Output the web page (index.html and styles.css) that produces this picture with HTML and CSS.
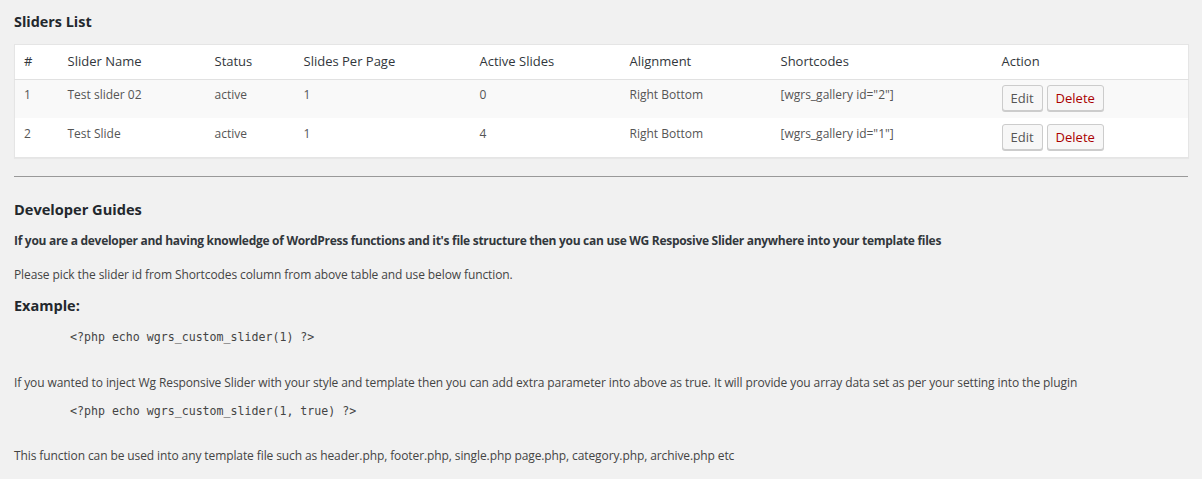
FILE: index.html
```html
<!DOCTYPE html>
<html>
<head>
<meta charset="utf-8">
<link rel="stylesheet" href="styles.css">
</head>
<body>
<div class="wrap">
  <h2 class="title">Sliders List</h2>
  <table class="sliders">
    <colgroup>
      <col class="c1"><col class="c2"><col class="c3"><col class="c4"><col class="c5"><col class="c6"><col class="c7"><col class="c8">
    </colgroup>
    <thead>
      <tr><th>#</th><th>Slider Name</th><th>Status</th><th>Slides Per Page</th><th>Active Slides</th><th>Alignment</th><th>Shortcodes</th><th>Action</th></tr>
    </thead>
    <tbody>
      <tr class="alt"><td>1</td><td>Test slider 02</td><td>active</td><td>1</td><td>0</td><td>Right Bottom</td><td>[wgrs_gallery id="2"]</td><td class="act"><button class="btn">Edit</button><button class="btn del">Delete</button></td></tr>
      <tr><td>2</td><td>Test Slide</td><td>active</td><td>1</td><td>4</td><td>Right Bottom</td><td>[wgrs_gallery id="1"]</td><td class="act"><button class="btn">Edit</button><button class="btn del">Delete</button></td></tr>
    </tbody>
  </table>
  <hr class="sep">
  <h2 class="title2">Developer Guides</h2>
  <p class="strong">If you are a developer and having knowledge of WordPress functions and it's file structure then you can use WG Resposive Slider anywhere into your template files</p>
  <p class="p1">Please pick the slider id from Shortcodes column from above table and use below function.</p>
  <h3 class="ex">Example:</h3>
  <pre class="code c-a">&lt;?php echo wgrs_custom_slider(1) ?&gt;</pre>
  <p class="p2">If you wanted to inject Wg Responsive Slider with your style and template then you can add extra parameter into above as true. It will provide you array data set as per your setting into the plugin</p>
  <pre class="code c-b">&lt;?php echo wgrs_custom_slider(1, true) ?&gt;</pre>
  <p class="p3">This function can be used into any template file such as header.php, footer.php, single.php page.php, category.php, archive.php etc</p>
</div>
</body>
</html>
```
FILE: styles.css
```css
html, body {
  margin: 0;
  padding: 0;
  background: #f1f1f1;
}
body {
  font-family: "Open Sans", "Noto Sans", sans-serif;
  font-size: 12px;
  color: #444;
  width: 1202px;
  height: 479px;
  overflow: hidden;
}
.wrap {
  padding: 0 14px;
}
.title {
  margin: 0;
  padding-top: 12px;
  font-size: 14.4px;
  line-height: 20px;
  font-weight: 700;
  color: #23282d;
}
.sliders {
  margin-top: 12px;
  width: 1174px;
  border-collapse: collapse;
  table-layout: fixed;
  background: #fff;
  border: 1px solid #e5e5e5;
  box-shadow: 0 1px 1px rgba(0,0,0,.04);
}
.c1 { width: 44px; }
.c2 { width: 147px; }
.c3 { width: 89px; }
.c4 { width: 176px; }
.c5 { width: 150px; }
.c6 { width: 151px; }
.c7 { width: 221px; }
.c8 { width: 196px; }
.sliders th {
  text-align: left;
  font-weight: 400;
  font-size: 13px;
  color: #32373c;
  padding: 7px 9px 9px;
  line-height: 18px;
  height: 17px;
  border-bottom: 1px solid #e1e1e1;
}
.sliders td {
  vertical-align: top;
  padding: 7px 9px 0;
  line-height: 18px;
  color: #555;
  height: 32px;
}
.sliders tr.alt td {
  background: #f9f9f9;
  padding-top: 6px;
  height: 32px;
}
.sliders td.act,
.sliders tr.alt td.act {
  padding-top: 5px;
}
.sliders tr:not(.alt) td.act {
  padding-top: 6px;
  height: 33px;
}
.btn {
  display: inline-block;
  height: 26px;
  margin: 0 4px 0 0;
  padding: 0 8px;
  font-family: inherit;
  font-size: 13px;
  line-height: 24px;
  color: #555;
  background: #f7f7f7;
  border: 1px solid #ccc;
  border-radius: 3px;
  box-shadow: 0 1px 0 #ccc;
  vertical-align: top;
}
.btn.del {
  color: #a00;
}
.sep {
  margin: 18px 0 0;
  border: 0;
  border-top: 1px solid #999;
  height: 0;
}
.title2 {
  margin: 0;
  padding-top: 22px;
  font-size: 14.6px;
  line-height: 20px;
  font-weight: 700;
  color: #23282d;
}
.strong {
  margin: 12px 0 0;
  font-weight: 700;
  font-size: 12px;
  letter-spacing: -0.29px;
  line-height: 20px;
  color: #32373c;
}
.p1, .p2, .p3 {
  letter-spacing: -0.1px;
  line-height: 20px;
}
.p1 {
  margin: 14px 0 0;
}
.ex {
  margin: 10px 0 0;
  font-size: 14.5px;
  line-height: 22px;
  font-weight: 700;
  color: #23282d;
}
.code {
  margin: 0;
  padding-left: 56px;
  font-family: "DejaVu Sans Mono", monospace;
  font-size: 11.6px;
  line-height: 20px;
  color: #444;
}
.c-a {
  margin-top: 10px;
}
.p2 {
  margin: 26px 0 0;
}
.c-b {
  margin-top: 8px;
}
.p3 {
  margin: 25px 0 0;
}
```
